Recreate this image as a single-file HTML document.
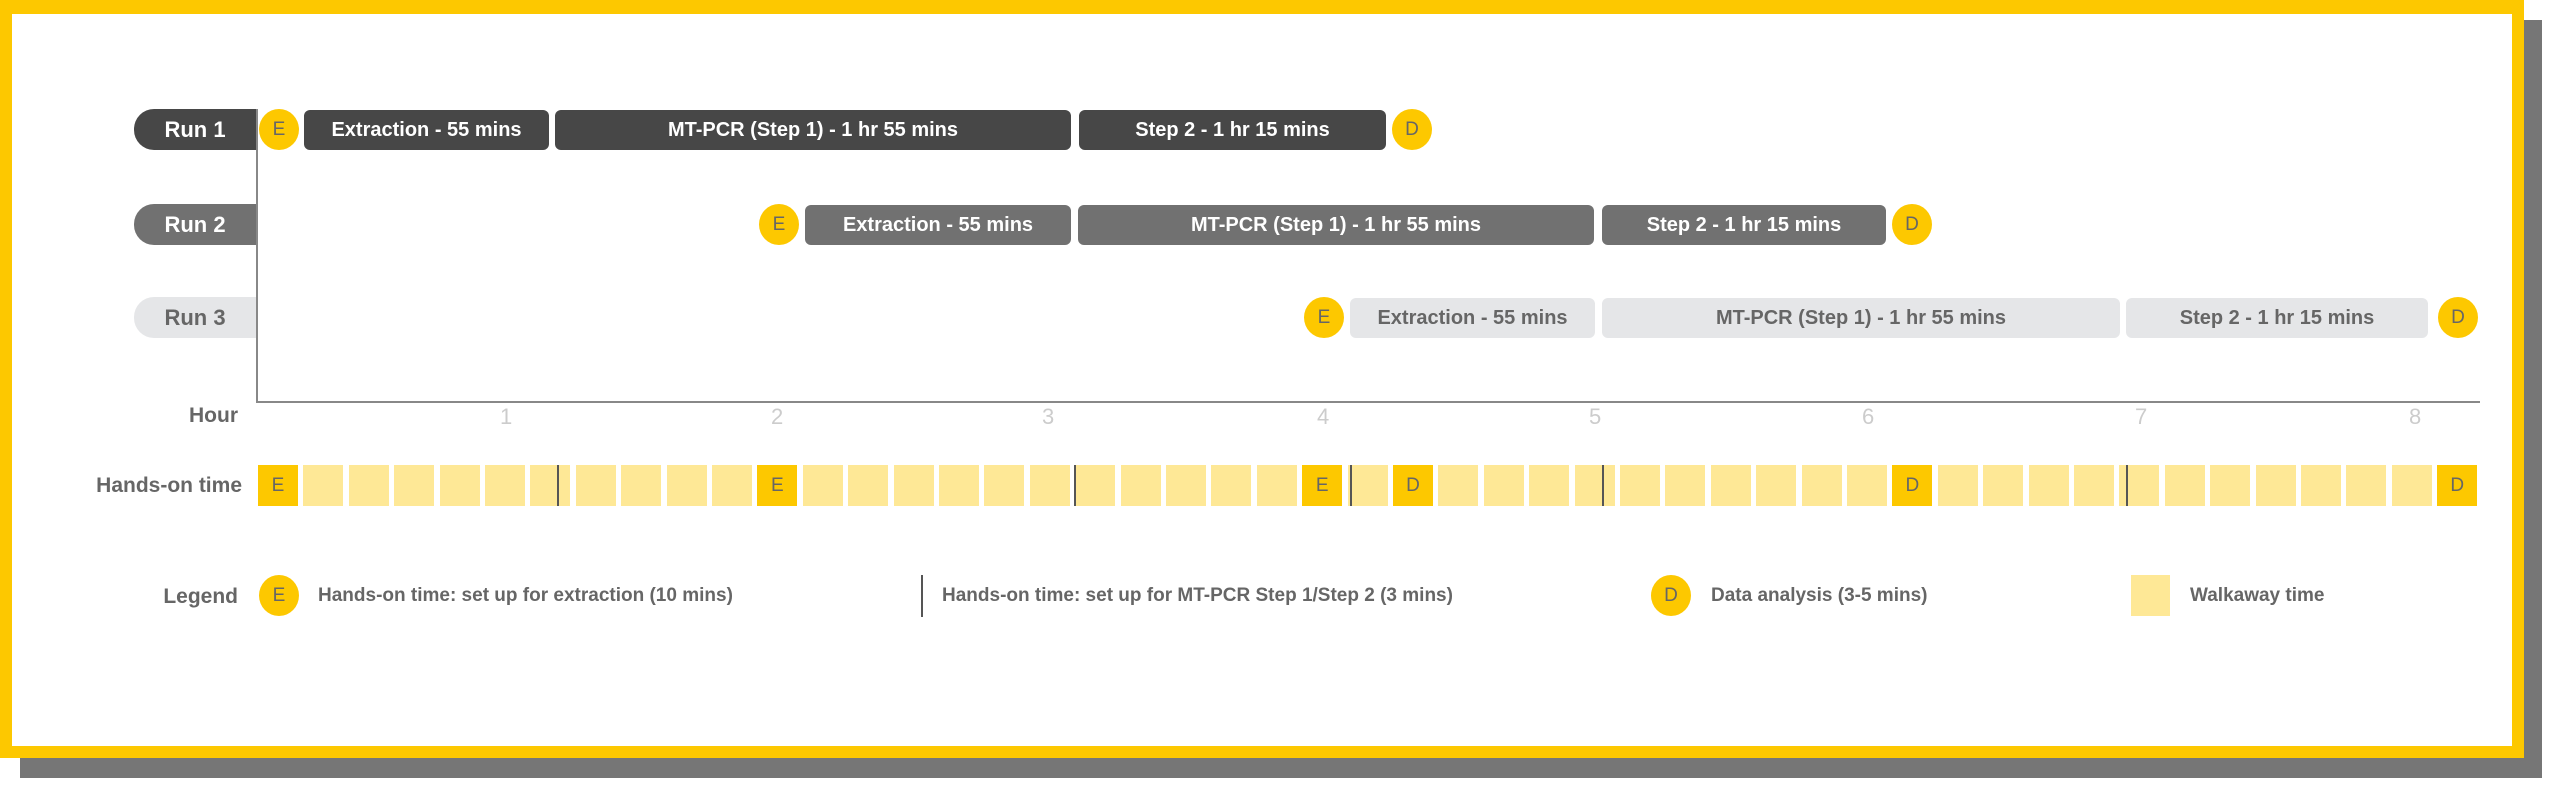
<!DOCTYPE html>
<html><head><meta charset="utf-8"><style>
*{margin:0;padding:0;box-sizing:border-box}
body{width:2560px;height:794px;background:#fff;position:relative;overflow:hidden;font-family:"Liberation Sans Narrow","Liberation Sans",sans-serif;}
.a{position:absolute}
.sh{left:20px;top:20px;width:2522px;height:758px;background:#767676}
.fr{left:0;top:0;width:2524px;height:758px;background:#fff;border:12px solid #fdc800;border-top-width:14px}
.pill{height:41px;border-radius:20px 0 0 20px;font-weight:bold;font-size:22px;display:flex;align-items:center;justify-content:center;width:122px;left:134px}
.bar{height:40px;border-radius:6px;font-weight:bold;font-size:20px;display:flex;align-items:center;justify-content:center;white-space:nowrap}
.r1{background:#474747;color:#fff}
.r2{background:#717171;color:#fff}
.r3{background:#e5e6e8;color:#666}
.c{width:40px;height:41px;border-radius:50%;background:#fdc800;color:#666;font-size:19px;display:flex;align-items:center;justify-content:center}
.lab{font-size:21px;font-weight:bold;color:#666;text-align:right;white-space:nowrap}
.hr{font-size:22px;color:#ccc;top:404px}
.sq{top:465px;width:40px;height:41px;background:#fee896;color:#666;font-size:19px;display:flex;align-items:center;justify-content:center}
.sq.d{background:#fdc800}
.vl{width:2px;background:#555}
.lt{font-size:19px;color:#666;white-space:nowrap;top:585px;font-weight:bold}
</style></head><body>
<div class="a sh"></div>
<div class="a fr"></div>

<div class="a pill r1" style="top:109px">Run 1</div>
<div class="a pill r2" style="top:204px">Run 2</div>
<div class="a pill r3" style="top:297px;color:#666">Run 3</div>

<div class="a" style="left:256px;top:109px;width:2px;height:294px;background:#888"></div>
<div class="a" style="left:256px;top:401px;width:2224px;height:2px;background:#888"></div>

<!-- Run 1 -->
<div class="a c" style="left:259px;top:109px">E</div>
<div class="a bar r1" style="left:304px;top:110px;width:245px">Extraction - 55 mins</div>
<div class="a bar r1" style="left:555px;top:110px;width:516px">MT-PCR (Step 1) - 1 hr 55 mins</div>
<div class="a bar r1" style="left:1079px;top:110px;width:307px">Step 2 - 1 hr 15 mins</div>
<div class="a c" style="left:1392px;top:109px">D</div>
<!-- Run 2 -->
<div class="a c" style="left:759px;top:204px">E</div>
<div class="a bar r2" style="left:805px;top:205px;width:266px">Extraction - 55 mins</div>
<div class="a bar r2" style="left:1078px;top:205px;width:516px">MT-PCR (Step 1) - 1 hr 55 mins</div>
<div class="a bar r2" style="left:1602px;top:205px;width:284px">Step 2 - 1 hr 15 mins</div>
<div class="a c" style="left:1892px;top:204px">D</div>
<!-- Run 3 -->
<div class="a c" style="left:1304px;top:297px">E</div>
<div class="a bar r3" style="left:1350px;top:298px;width:245px">Extraction - 55 mins</div>
<div class="a bar r3" style="left:1602px;top:298px;width:518px">MT-PCR (Step 1) - 1 hr 55 mins</div>
<div class="a bar r3" style="left:2126px;top:298px;width:302px">Step 2 - 1 hr 15 mins</div>
<div class="a c" style="left:2438px;top:297px">D</div>

<div class="a lab" style="right:2322px;top:404px">Hour</div>
<div class="a hr" style="left:500px">1</div>
<div class="a hr" style="left:771px">2</div>
<div class="a hr" style="left:1042px">3</div>
<div class="a hr" style="left:1317px">4</div>
<div class="a hr" style="left:1589px">5</div>
<div class="a hr" style="left:1862px">6</div>
<div class="a hr" style="left:2135px">7</div>
<div class="a hr" style="left:2409px">8</div>

<div class="a lab" style="right:2318px;top:474px">Hands-on time</div>
<div id="sqs"></div>
<script>
var h='',marks={0:'E',11:'E',23:'E',25:'D',36:'D',48:'D'};
for(var i=0;i<49;i++){var x=258+i*45.4;var m=marks[i];
h+='<div class="a sq'+(m?' d':'')+'" style="left:'+x.toFixed(1)+'px">'+(m||'')+'</div>';}
[557,1074,1350,1602,2126].forEach(function(x){h+='<div class="a vl" style="left:'+x+'px;top:465px;height:41px"></div>';});
document.getElementById('sqs').innerHTML=h;
</script>

<div class="a lab" style="right:2322px;top:585px">Legend</div>
<div class="a c" style="left:259px;top:575px">E</div>
<div class="a lt" style="left:318px">Hands-on time: set up for extraction (10 mins)</div>
<div class="a vl" style="left:921px;top:575px;height:42px"></div>
<div class="a lt" style="left:942px">Hands-on time: set up for MT-PCR Step 1/Step 2 (3 mins)</div>
<div class="a c" style="left:1651px;top:575px">D</div>
<div class="a lt" style="left:1711px">Data analysis (3-5 mins)</div>
<div class="a" style="left:2131px;top:575px;width:39px;height:41px;background:#fee896"></div>
<div class="a lt" style="left:2190px">Walkaway time</div>
</body></html>
